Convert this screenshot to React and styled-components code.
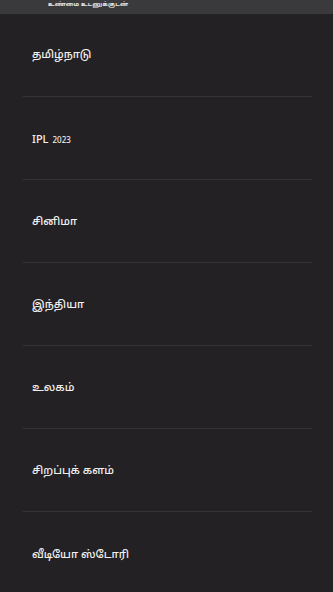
import styled, { createGlobalStyle } from "styled-components";

const GlobalStyle = createGlobalStyle`
    * {
        box-sizing: border-box;
    }

    html, body {
        margin: 0;
        padding: 0;
        background-color: #232124;
    }

    body {
        font-family: "Noto Sans", "Noto Sans Tamil", "Lato", sans-serif;
        color: #f2f2f2;
    }
`

const menuItems = [
    { id: "tn", label: "தமிழ்நாடு" },
    { id: "ipl", label: "IPL", small: "2023" },
    { id: "cinema", label: "சினிமா" },
    { id: "india", label: "இந்தியா" },
    { id: "world", label: "உலகம்" },
    { id: "special", label: "சிறப்புக் களம்" },
    { id: "video", label: "வீடியோ ஸ்டோரி" },
];

const App = () => {
    return (
        <>
            <GlobalStyle />
            <Page>
                <TopBar>
                    <Tagline>உண்மை உடனுக்குடன்</Tagline>
                </TopBar>

                <Menu>
                    {menuItems.map((item) => (
                        <MenuItem key={item.id}>
                            <MenuLabel>
                                {item.label}
                                {item.small && <Small>{item.small}</Small>}
                            </MenuLabel>
                        </MenuItem>
                    ))}
                </Menu>
            </Page>
        </>
    );
}

const Page = styled.div`
    width: 333px;
    min-height: 592px;
    background-color: #232124;
    display: flex;
    flex-direction: column;
`

const TopBar = styled.header`
    height: 14px;
    background-color: #3a393b;
    display: flex;
    align-items: flex-start;
    padding-left: 48px;
    overflow: hidden;
`

const Tagline = styled.span`
    font-size: 6px;
    font-weight: 700;
    line-height: 8px;
    color: #e8e4e0;
    letter-spacing: 0.2px;
`

const Menu = styled.ul`
    list-style: none;
    margin: 0;
    padding: 0 21px 0 23px;
    display: flex;
    flex-direction: column;
`

const MenuItem = styled.li`
    height: 83px;
    display: flex;
    align-items: center;
    padding-left: 9px;
    border-bottom: 1px solid #353336;

    &:first-child {
        padding-bottom: 2px;
    }

    &:last-child {
        border-bottom: 0;
    }
`

const MenuLabel = styled.span`
    font-size: 11px;
    font-weight: 500;
    color: #f0f0f0;
    display: flex;
    align-items: baseline;
    gap: 4px;
`

const Small = styled.span`
    font-size: 8px;
`

export default App;
